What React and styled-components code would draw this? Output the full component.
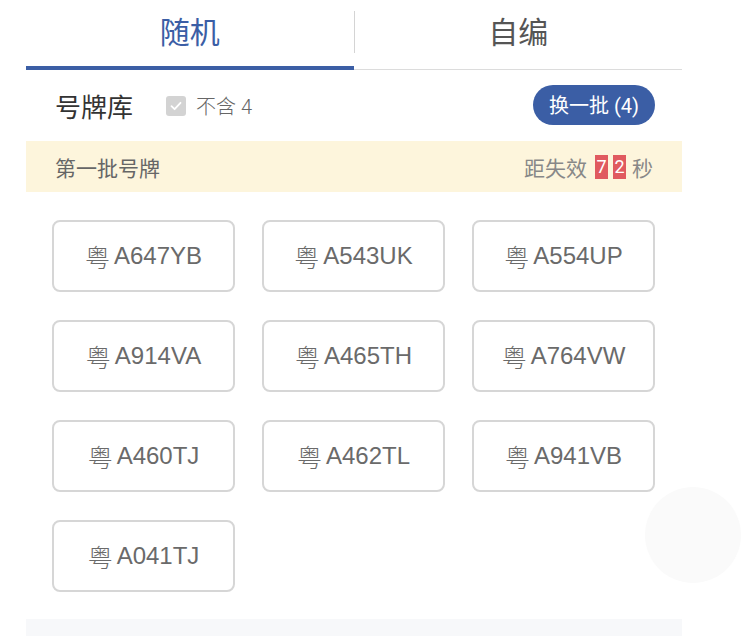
import React from "react";
import styled, { createGlobalStyle } from "styled-components";

const Global = createGlobalStyle`
  html, body { margin: 0; padding: 0; background: #fff; }
  body { font-family: Roboto, "Noto Sans CJK SC", sans-serif; }
`;

const Page = styled.div`
  position: relative;
  width: 742px;
  height: 636px;
  overflow: hidden;
  padding-left: 26px;
  box-sizing: border-box;
`;

const Panel = styled.div`
  width: 656px;
`;

const Tabs = styled.div`
  display: flex;
  height: 70px;
  border-bottom: 1px solid #dcdcdc;
  box-sizing: border-box;
`;

const Tab = styled.div`
  position: relative;
  flex: 1;
  display: flex;
  align-items: center;
  justify-content: center;
  font-size: 30px;
  color: ${(p) => (p.$active ? "#3b5ea5" : "#555")};
  padding-bottom: 10px;
  box-sizing: border-box;
  ${(p) =>
    p.$active &&
    `&::after { content: ""; position: absolute; left: 0; right: 0; bottom: -1px; height: 4px; background: #3b5ea5; }`}
`;

const TabDivider = styled.div`
  width: 1px;
  height: 42px;
  margin-top: 11px;
  background: #d4d4d4;
`;

const Toolbar = styled.div`
  display: flex;
  align-items: center;
  height: 71px;
  padding: 0 27px 0 29px;
`;

const Title = styled.div`
  font-size: 26px;
  color: #333;
  margin-right: 33px;
`;

const Check = styled.span`
  width: 20px;
  height: 20px;
  border-radius: 3px;
  background: #d3d3d3;
  display: inline-flex;
  align-items: center;
  justify-content: center;
  margin-right: 10px;
`;

const CheckLabel = styled.span`
  display: inline-flex;
  align-items: center;
  font-size: 20px;
  color: #666;
  font-weight: 300;
`;

const Spacer = styled.div`
  flex: 1;
`;

const Button = styled.button`
  height: 40px;
  padding: 0 16px;
  border: none;
  border-radius: 20px;
  background: #3b5ea5;
  color: #fff;
  font-family: Roboto, "Noto Sans CJK SC", sans-serif;
  font-size: 20px;
  margin-top: -2px;
`;

const Notice = styled.div`
  display: flex;
  align-items: center;
  justify-content: space-between;
  height: 51px;
  padding: 0 29px;
  background: #fdf5dc;
  font-size: 21px;
  color: #666;
`;

const Countdown = styled.div`
  display: flex;
  align-items: center;
  color: #888;
`;

const Digit = styled.span`
  display: inline-flex;
  align-items: center;
  justify-content: center;
  width: 13px;
  height: 24px;
  background: #e05a5f;
  color: #fff;
  font-size: 18px;
  margin-left: ${(p) => (p.$first ? "8px" : "5px")};
`;

const Sec = styled.span`
  margin-left: 6px;
`;

const Grid = styled.div`
  display: grid;
  grid-template-columns: repeat(3, 183px);
  column-gap: 27px;
  row-gap: 28px;
  padding: 28px 26px 27px 26px;
`;

const Plate = styled.div`
  height: 72px;
  box-sizing: border-box;
  border: 2px solid #d6d6d6;
  border-radius: 8px;
  display: flex;
  align-items: center;
  justify-content: center;
  font-family: "Liberation Sans", "Noto Sans CJK SC", sans-serif;
  font-size: 24px;
  color: #6a6a6a;
  gap: 4px;
`;

const Province = styled.span`
  font-family: "Noto Sans CJK SC", sans-serif;
  font-size: 25px;
  font-weight: 300;
`;

const Footer = styled.div`
  height: 30px;
  background: #f7f8fa;
`;

const Fab = styled.div`
  position: absolute;
  left: 645px;
  top: 487px;
  width: 96px;
  height: 96px;
  border-radius: 50%;
  background: #fafafa;
`;

const plates = [
  "A647YB", "A543UK", "A554UP",
  "A914VA", "A465TH", "A764VW",
  "A460TJ", "A462TL", "A941VB",
  "A041TJ",
];

export default function App() {
  return (
    <>
      <Global />
      <Page>
        <Panel>
          <Tabs>
            <Tab $active>随机</Tab>
            <TabDivider />
            <Tab>自编</Tab>
          </Tabs>
          <Toolbar>
            <Title>号牌库</Title>
            <CheckLabel>
              <Check>
                <svg width="14" height="14" viewBox="0 0 14 14">
                  <path d="M2.5 7.2 L5.6 10.2 L11.5 3.8" fill="none" stroke="#fff" strokeWidth="1.8" strokeLinecap="round" strokeLinejoin="round" />
                </svg>
              </Check>
              不含 4
            </CheckLabel>
            <Spacer />
            <Button>换一批 (4)</Button>
          </Toolbar>
          <Notice>
            <span>第一批号牌</span>
            <Countdown>
              距失效
              <Digit $first>7</Digit>
              <Digit>2</Digit>
              <Sec>秒</Sec>
            </Countdown>
          </Notice>
          <Grid>
            {plates.map((p) => (
              <Plate key={p}>
                <Province>粤</Province>
                <span>{p}</span>
              </Plate>
            ))}
          </Grid>
          <Footer />
        </Panel>
        <Fab />
      </Page>
    </>
  );
}
